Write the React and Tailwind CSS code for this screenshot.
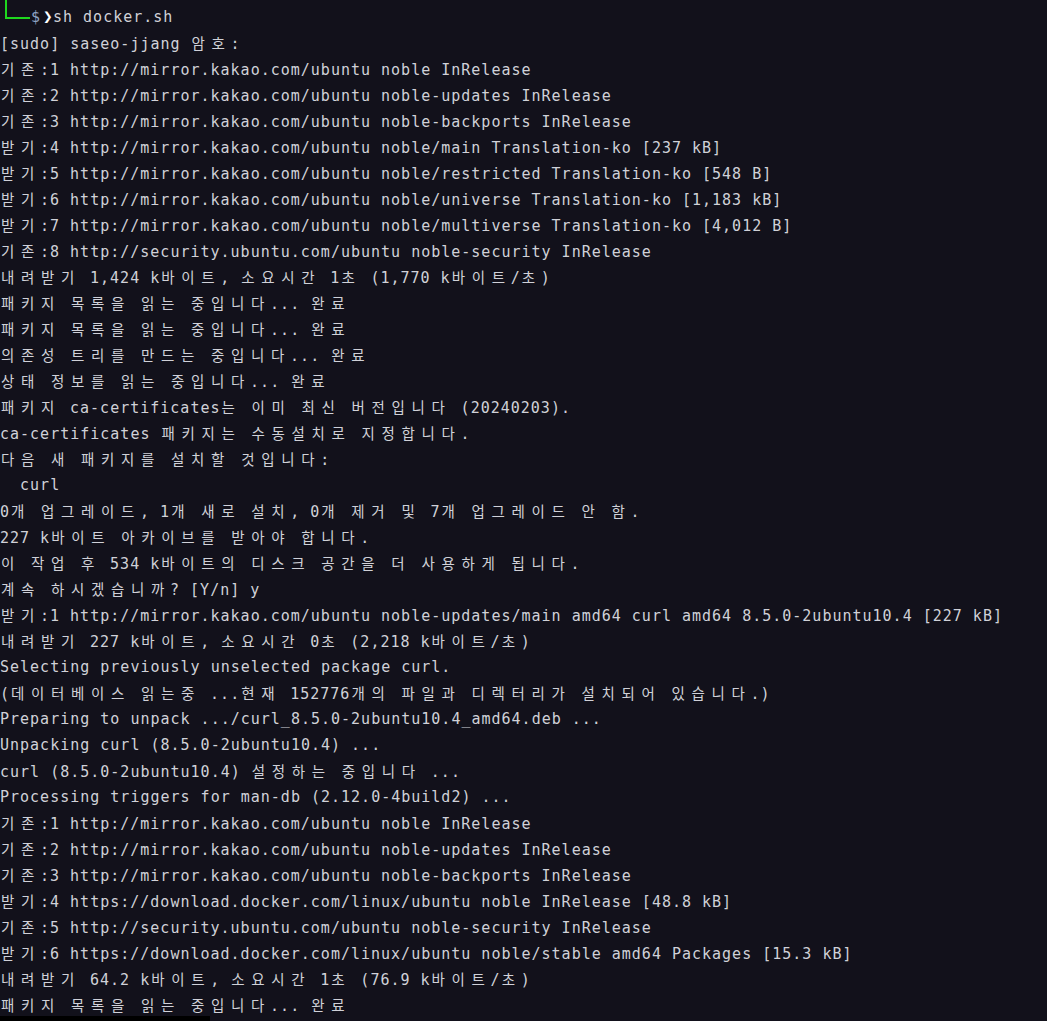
const LINES = [
  '[sudo] saseo-jjang 암호:',
  '기존:1 http://mirror.kakao.com/ubuntu noble InRelease',
  '기존:2 http://mirror.kakao.com/ubuntu noble-updates InRelease',
  '기존:3 http://mirror.kakao.com/ubuntu noble-backports InRelease',
  '받기:4 http://mirror.kakao.com/ubuntu noble/main Translation-ko [237 kB]',
  '받기:5 http://mirror.kakao.com/ubuntu noble/restricted Translation-ko [548 B]',
  '받기:6 http://mirror.kakao.com/ubuntu noble/universe Translation-ko [1,183 kB]',
  '받기:7 http://mirror.kakao.com/ubuntu noble/multiverse Translation-ko [4,012 B]',
  '기존:8 http://security.ubuntu.com/ubuntu noble-security InRelease',
  '내려받기 1,424 k바이트, 소요시간 1초 (1,770 k바이트/초)',
  '패키지 목록을 읽는 중입니다... 완료',
  '패키지 목록을 읽는 중입니다... 완료',
  '의존성 트리를 만드는 중입니다... 완료',
  '상태 정보를 읽는 중입니다... 완료',
  '패키지 ca-certificates는 이미 최신 버전입니다 (20240203).',
  'ca-certificates 패키지는 수동설치로 지정합니다.',
  '다음 새 패키지를 설치할 것입니다:',
  '  curl',
  '0개 업그레이드, 1개 새로 설치, 0개 제거 및 7개 업그레이드 안 함.',
  '227 k바이트 아카이브를 받아야 합니다.',
  '이 작업 후 534 k바이트의 디스크 공간을 더 사용하게 됩니다.',
  '계속 하시겠습니까? [Y/n] y',
  '받기:1 http://mirror.kakao.com/ubuntu noble-updates/main amd64 curl amd64 8.5.0-2ubuntu10.4 [227 kB]',
  '내려받기 227 k바이트, 소요시간 0초 (2,218 k바이트/초)',
  'Selecting previously unselected package curl.',
  '(데이터베이스 읽는중 ...현재 152776개의 파일과 디렉터리가 설치되어 있습니다.)',
  'Preparing to unpack .../curl_8.5.0-2ubuntu10.4_amd64.deb ...',
  'Unpacking curl (8.5.0-2ubuntu10.4) ...',
  'curl (8.5.0-2ubuntu10.4) 설정하는 중입니다 ...',
  'Processing triggers for man-db (2.12.0-4build2) ...',
  '기존:1 http://mirror.kakao.com/ubuntu noble InRelease',
  '기존:2 http://mirror.kakao.com/ubuntu noble-updates InRelease',
  '기존:3 http://mirror.kakao.com/ubuntu noble-backports InRelease',
  '받기:4 https://download.docker.com/linux/ubuntu noble InRelease [48.8 kB]',
  '기존:5 http://security.ubuntu.com/ubuntu noble-security InRelease',
  '받기:6 https://download.docker.com/linux/ubuntu noble/stable amd64 Packages [15.3 kB]',
  '내려받기 64.2 k바이트, 소요시간 1초 (76.9 k바이트/초)',
  '패키지 목록을 읽는 중입니다... 완료',
]

const WIDE = /[\u1100-\u11ff\u3130-\u318f\uac00-\ud7af]/

// terminal grid: ascii = 1 cell (10px), hangul = 2 cells
function TermLine({ text }) {
  const parts = []
  let buf = ''
  Array.from(text).forEach((ch, i) => {
    if (WIDE.test(ch)) {
      if (buf) parts.push(<span key={'a' + i}>{buf}</span>)
      buf = ''
      parts.push(
        <span
          key={'w' + i}
          className="inline-block w-[20px] text-left text-[14.5px] pl-[1px] tracking-normal"
          style={{ fontFamily: '"Noto Sans CJK KR", sans-serif' }}
        >
          {ch}
        </span>
      )
    } else {
      buf += ch
    }
  })
  if (buf) parts.push(<span key="end">{buf}</span>)
  return <div className="h-[26px] leading-[26px] whitespace-pre">{parts}</div>
}

export default function App() {
  return (
    <div
      className="h-[1021px] w-full overflow-hidden bg-[#12111b] text-[#d0d1d8] text-[15px] tracking-[1px] pt-[4px]"
      style={{ fontFamily: '"DejaVu Sans Mono", "Noto Sans CJK KR", monospace' }}
    >
      <div className="h-[26px] leading-[26px] whitespace-pre flex items-center">
        <div className="relative w-[31px] h-[26px]">
          <span className="absolute left-[5px] -top-[4px] w-[2px] h-[19px] bg-[#1ed71e]" />
          <span className="absolute left-[5px] top-[13px] w-[25px] h-[2px] bg-[#1ed71e]" />
        </div>
        <span className="text-[#8ea2c4] w-[12px] tracking-normal">$</span>
        <span className="text-white font-bold text-[16px] w-[10px] tracking-normal leading-none">❯</span>
        <span>sh docker.sh</span>
      </div>
      {LINES.map((l, i) => (
        <TermLine key={i} text={l} />
      ))}
      <div className="w-[210px] h-[6px] -mt-[2px] bg-black" />
    </div>
  )
}
